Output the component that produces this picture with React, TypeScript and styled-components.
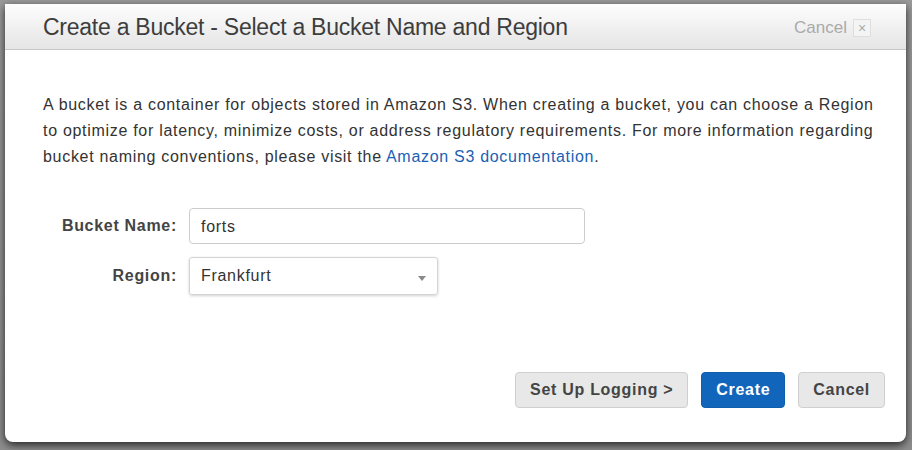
import React from "react";
import styled, { createGlobalStyle } from "styled-components";

const Global = createGlobalStyle`
  html, body { margin: 0; padding: 0; }
  body {
    background: #8f8f8f;
    font-family: "Liberation Sans", Arial, sans-serif;
    width: 912px;
    height: 450px;
    overflow: hidden;
  }
`;

const Page = styled.div`
  width: 912px;
  height: 450px;
  padding: 4px 0 0 5px;
  box-sizing: border-box;
  background: linear-gradient(#9a9a9a, #8d8d8d);
`;

const Dialog = styled.div`
  width: 901px;
  height: 438px;
  background: #fff;
  border-radius: 0 0 8px 8px;
  box-shadow: 0 3px 8px rgba(0, 0, 0, 0.75);
  display: flex;
  flex-direction: column;
  overflow: hidden;
`;

const Header = styled.div`
  height: 45px;
  flex: none;
  display: flex;
  align-items: center;
  justify-content: space-between;
  padding: 0 35px 0 38px;
  background: linear-gradient(#fdfdfd, #e5e5e5);
  border-bottom: 1px solid #c8c8c8;
`;

const Title = styled.h1`
  margin: 0;
  font-size: 23px;
  font-weight: normal;
  color: #3d3d3d;
  letter-spacing: -0.25px;
  padding-top: 2px;
`;

const HeaderCancel = styled.div`
  display: flex;
  align-items: center;
  gap: 6px;
  color: #aaaaaa;
  font-size: 17px;
  padding-top: 2px;
`;

const CloseBox = styled.span`
  display: inline-flex;
  align-items: center;
  justify-content: center;
  width: 16px;
  height: 16px;
  border: 1px solid #dedede;
  background: #f4f4f4;
  color: #aaa;
  font-size: 14px;
  line-height: 1;
`;

const Body = styled.div`
  flex: 1;
  display: flex;
  flex-direction: column;
  padding: 42px 21px 34px 38px;
  letter-spacing: 0.7px;
`;

const Intro = styled.p`
  margin: 0;
  width: 845px;
  font-size: 16px;
  line-height: 26px;
  color: #333;
`;

const Link = styled.a`
  color: #1a5fb4;
  text-decoration: none;
`;

const Form = styled.div`
  margin-top: 38px;
  display: grid;
  grid-template-columns: 134px auto;
  column-gap: 12px;
  row-gap: 13px;
  align-items: center;
  justify-content: start;
`;

const Label = styled.label`
  text-align: right;
  font-size: 16px;
  font-weight: bold;
  color: #444;
`;

const TextInput = styled.div`
  width: 396px;
  height: 36px;
  box-sizing: border-box;
  border: 1px solid #cccccc;
  border-radius: 4px;
  padding: 1px 11px 0;
  display: flex;
  align-items: center;
  font-size: 16px;
  color: #333;
`;

const Select = styled.div`
  width: 249px;
  height: 38px;
  box-sizing: border-box;
  border: 1px solid #d4d4d4;
  border-radius: 3px;
  box-shadow: 0 1px 3px rgba(0, 0, 0, 0.18);
  padding: 0 11px 1px;
  display: flex;
  align-items: center;
  justify-content: space-between;
  font-size: 16px;
  color: #333;
`;

const Arrow = styled.span`
  width: 0;
  height: 0;
  border-left: 4px solid transparent;
  border-right: 4px solid transparent;
  border-top: 5px solid #8a8a8a;
  margin-top: 6px;
`;

const Footer = styled.div`
  margin-top: auto;
  display: flex;
  justify-content: flex-end;
  gap: 13px;
`;

const Button = styled.button<{ $primary?: boolean }>`
  height: 36px;
  box-sizing: border-box;
  padding: 0 14px;
  border-radius: 4px;
  font-family: "Liberation Sans", Arial, sans-serif;
  font-size: 16px;
  font-weight: bold;
  letter-spacing: 0.7px;
  cursor: pointer;
  border: 1px solid ${(p) => (p.$primary ? "#0f5fae" : "#cfcfcf")};
  background: ${(p) => (p.$primary ? "#1166bb" : "#e8e8e8")};
  color: ${(p) => (p.$primary ? "#fff" : "#444")};
`;

export default function App() {
  return (
    <>
      <Global />
      <Page>
        <Dialog>
          <Header>
            <Title>Create a Bucket - Select a Bucket Name and Region</Title>
            <HeaderCancel>
              Cancel <CloseBox>×</CloseBox>
            </HeaderCancel>
          </Header>
          <Body>
            <Intro>
              A bucket is a container for objects stored in Amazon S3. When creating a bucket, you can
              choose a Region to optimize for latency, minimize costs, or address regulatory
              requirements. For more information regarding bucket naming conventions, please visit
              the <Link href="#">Amazon S3 documentation</Link>.
            </Intro>
            <Form>
              <Label>Bucket Name:</Label>
              <TextInput>forts</TextInput>
              <Label>Region:</Label>
              <Select>
                Frankfurt
                <Arrow />
              </Select>
            </Form>
            <Footer>
              <Button>Set Up Logging &gt;</Button>
              <Button $primary>Create</Button>
              <Button>Cancel</Button>
            </Footer>
          </Body>
        </Dialog>
      </Page>
    </>
  );
}
